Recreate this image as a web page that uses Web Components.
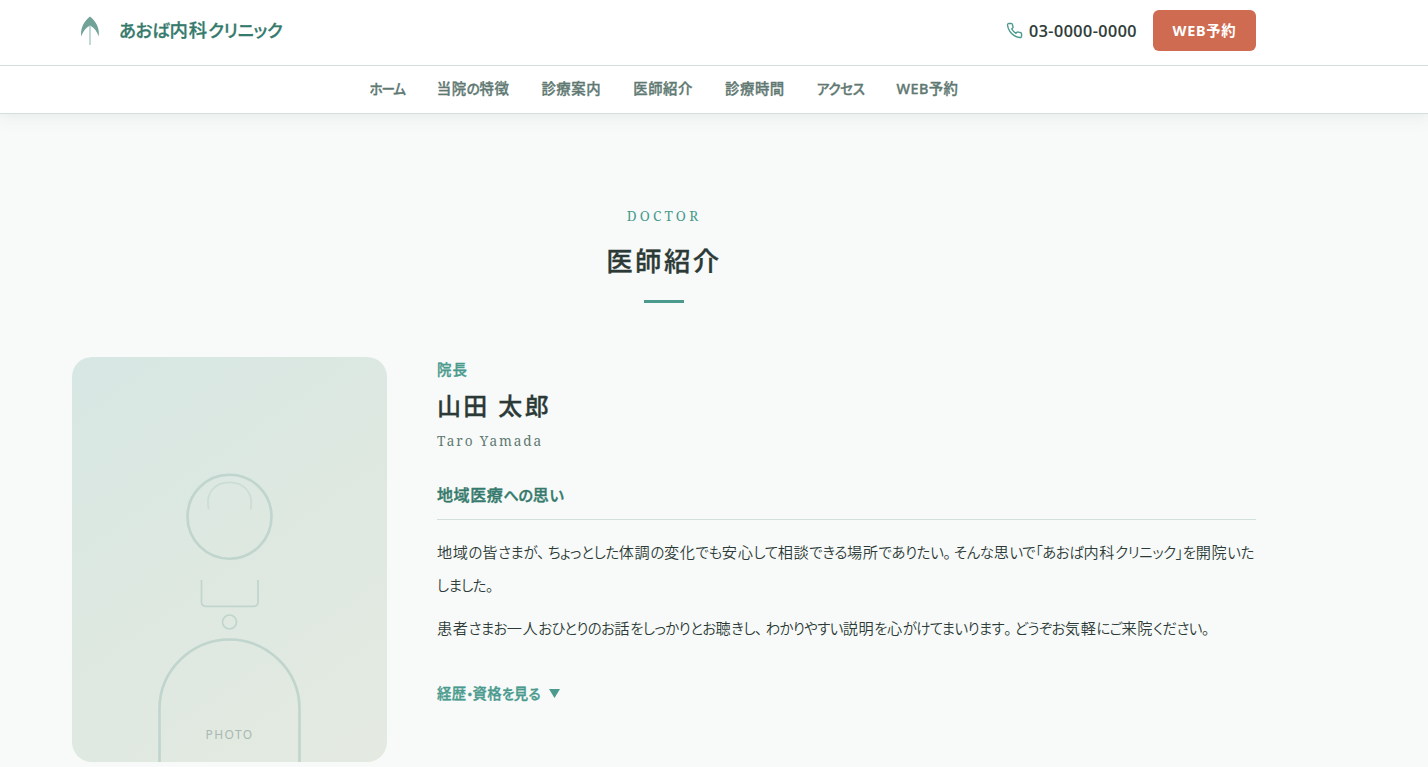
<!DOCTYPE html>
<html lang="ja">
<head>
<meta charset="UTF-8">
<title>あおば内科クリニック</title>
<style>
    html, body {
        margin: 0;
        height: 100%;
        overflow: hidden;
    }

    body {
        --green: #4a9a8e;
        --green-dark: #357a6c;
        --ink: #2c3a37;
        --muted: #5f7972;
        --line: #d3dfdc;
        --serif: "Noto Serif", "Liberation Serif", serif;
        background: #f8faf9;
        color: var(--ink);
        font-family: "Noto Sans", "Noto Sans CJK JP", sans-serif;
        font-size: 15px;
    }
</style>
</head>
<body>
<clinic-header></clinic-header>
<doctor-section></doctor-section>

<script>
// Japanese text with narrow kana; "fit" is the width of the line in px
class JaText extends HTMLElement {

    constructor() {
        super();
        this.attachShadow({ mode: 'open' });
    }

    connectedCallback() {
        const text = this.textContent.trim();
        const html = text
            .replace(/[\u3003-\u30ff]+/g, '<span class="kana">$&</span>')
            .replace(/[、。](?=.)/g, '<span class="mark">$&</span>');

        this.shadowRoot.innerHTML =
            `<style>
                :host {
                    display: inline-block;
                    white-space: nowrap;
                    font-feature-settings: "palt";
                }
                .kana {
                    font-size: 0.95em;
                    letter-spacing: var(--kana, inherit);
                }
                .mark {
                    letter-spacing: 3px;
                }
            </style>${html}`;

        this.fit(text);
    }

    fit(text) {
        const width = Number(this.getAttribute('fit'));
        if (!width) return;

        const kana = (text.match(/[\u3003-\u30ff]/g) || []).length;
        const now = this.getBoundingClientRect().width;
        const spacing = parseFloat(getComputedStyle(this).letterSpacing) || 0;

        if (kana) {
            this.style.setProperty('--kana', (spacing + (width - now) / kana) + 'px');
        } else {
            this.style.letterSpacing = (spacing + (width - now) / text.length) + 'px';
        }
    }
}

class ClinicHeader extends HTMLElement {

    constructor() {
        super();
        this.attachShadow({ mode: 'open' });
        this.shadowRoot.innerHTML =
            `
            <style>
                :host {
                    display: block;
                    position: relative;
                    background: #fff;
                    border-bottom: 1px solid var(--line);
                    box-shadow: 0 2px 16px 2px rgba(44, 90, 80, 0.08);
                }
                .top {
                    display: flex;
                    align-items: center;
                    justify-content: space-between;
                    width: 1184px;
                    height: 41px;
                    padding: 10px 0 14px 72px;
                }
                .brand {
                    display: flex;
                    align-items: center;
                    gap: 11px;
                    color: var(--green-dark);
                    font-size: 18.4px;
                    font-weight: 500;
                    -webkit-text-stroke: 0.3px;
                    letter-spacing: 0.9px;
                    line-height: 34px;
                }
                .brand ja-text {
                    padding-bottom: 2px;
                }
                svg {
                    display: block;
                }
                .contact {
                    display: flex;
                    align-items: center;
                    gap: 16px;
                }
                .tel {
                    display: flex;
                    align-items: center;
                    gap: 6px;
                    font-size: 16px;
                    font-weight: 500;
                    -webkit-text-stroke: 0.2px;
                }
                .reserve {
                    width: 103px;
                    border-radius: 6px;
                    background: #cf6b50;
                    color: #fff;
                    font-size: 14.4px;
                    font-weight: 700;
                    line-height: 41px;
                    text-align: center;
                }
                nav {
                    border-top: 1px solid var(--line);
                }
                ul {
                    display: flex;
                    justify-content: center;
                    gap: 32px;
                    width: 1328px;
                    margin: 0;
                    padding: 0 0 2px;
                    list-style: none;
                    color: var(--muted);
                    font-size: 14.4px;
                    font-weight: 500;
                    -webkit-text-stroke: 0.35px;
                    letter-spacing: 0.57px;
                    line-height: 45px;
                }
            </style>
            <div class="top">
                <div class="brand">
                    <svg width="36" height="36" viewBox="0 0 36 36">
                        <path d="M18 3.5C12.500 8 8 14.500 9.300 23.500C11 18.500 13.500 15 18 12.500C22.500 15 25 18.500 26.700 23.500C28 14.500 23.500 8 18 3.500Z" fill="#357a6c" opacity="0.7"/>
                        <path d="M18 13V32" stroke="#4a9a8e" stroke-width="2" opacity="0.35"/>
                    </svg>
                    <ja-text fit="163.500">あおば内科クリニック</ja-text>
                </div>
                <div class="contact">
                    <div class="tel">
                        <svg width="17" height="17" viewBox="0 0 24 24" fill="none" stroke="#4a9a8e" stroke-width="2" stroke-linecap="round" stroke-linejoin="round">
                            <path d="M22 16.920v3a2 2 0 0 1-2.180 2 19.790 19.790 0 0 1-8.630-3.070 19.500 19.500 0 0 1-6-6A19.790 19.790 0 0 1 2.120 4.180 2 2 0 0 1 4.110 2h3a2 2 0 0 1 2 1.720c.127.960.361 1.903.700 2.810a2 2 0 0 1-.450 2.110L8.090 9.910a16 16 0 0 0 6 6l1.270-1.270a2 2 0 0 1 2.110-.450c.907.339 1.850.573 2.810.700A2 2 0 0 1 22 16.920z"/>
                        </svg>
                        <ja-text fit="108">03-0000-0000</ja-text>
                    </div>
                    <div class="reserve"><ja-text fit="64">WEB予約</ja-text></div>
                </div>
            </div>
            <nav>
                <ul>
                    <li><ja-text fit="35.2">ホーム</ja-text></li>
                    <li><ja-text fit="72.6">当院の特徴</ja-text></li>
                    <li><ja-text fit="59.8">診療案内</ja-text></li>
                    <li><ja-text fit="59.8">医師紹介</ja-text></li>
                    <li><ja-text fit="59.8">診療時間</ja-text></li>
                    <li><ja-text fit="47.6">アクセス</ja-text></li>
                    <li><ja-text fit="62">WEB予約</ja-text></li>
                </ul>
            </nav>
            `;
    }
}

class DoctorPhoto extends HTMLElement {

    constructor() {
        super();
        this.attachShadow({ mode: 'open' });
        this.shadowRoot.innerHTML =
            `
            <style>
                :host {
                    display: grid;
                    width: 315px;
                    height: 405px;
                    overflow: hidden;
                    border-radius: 20px;
                    background: linear-gradient(145deg, #d7e7e3 0%, #dde8e1 45%, #e4eae1 100%);
                }
                svg, .label {
                    grid-area: 1 / 1;
                }
                .label {
                    align-self: end;
                    justify-self: center;
                    padding-bottom: 18px;
                    color: #a9b8b1;
                    font-size: 12px;
                    letter-spacing: 1.4px;
                    line-height: 18px;
                }
            </style>
            <svg width="315" height="405" viewBox="0 0 315 405" fill="none" stroke="#bfd5cd">
                <circle cx="157.500" cy="159.700" r="42" stroke-width="2.600"/>
                <path d="M136.800 152.500C133 137 142 125.300 157.500 125.300S182 137 178.500 152.500" stroke="#cbddd5" stroke-width="1.700"/>
                <path d="M129.500 223V245Q129.500 249.300 134 249.300H181.500Q186 249.300 186 245V223" stroke-width="1.700"/>
                <circle cx="157.500" cy="265" r="7" stroke-width="1.700"/>
                <path d="M87.500 405V352C87.500 312 121 282.500 157.500 282.500S227.500 312 227.500 352V405" stroke-width="2.600"/>
            </svg>
            <span class="label">PHOTO</span>
            `;
    }
}

class DoctorSection extends HTMLElement {

    constructor() {
        super();
        this.attachShadow({ mode: 'open' });
        this.shadowRoot.innerHTML =
            `
            <style>
                :host {
                    display: block;
                    width: 1184px;
                    padding: 91px 0 0 72px;
                }
                header {
                    display: flex;
                    flex-direction: column;
                    align-items: center;
                }
                .en {
                    color: var(--green);
                    font-family: var(--serif);
                    font-size: 13.6px;
                    letter-spacing: 2.2px;
                    line-height: 22px;
                }
                h2 {
                    margin: 14px 0 19px;
                    font-size: 26.4px;
                    font-weight: 500;
                    -webkit-text-stroke: 0.3px;
                    letter-spacing: 2.4px;
                    line-height: 40px;
                }
                .bar {
                    width: 40px;
                    height: 3px;
                    background: var(--green);
                }
                .profile {
                    display: flex;
                    gap: 50px;
                    margin-top: 54px;
                }
                .role {
                    padding-top: 1px;
                    color: var(--green);
                    font-size: 14.4px;
                    font-weight: 500;
                    -webkit-text-stroke: 0.35px;
                    letter-spacing: 0.7px;
                    line-height: 24px;
                }
                .name {
                    margin: 6px 0 6px;
                    font-size: 24px;
                    font-weight: 500;
                    -webkit-text-stroke: 0.3px;
                    line-height: 36px;
                }
                .roman {
                    color: var(--muted);
                    font-family: var(--serif);
                    font-size: 13.6px;
                    letter-spacing: 1.4px;
                    line-height: 22px;
                }
                h3 {
                    margin: 29px 0 16px;
                    padding-bottom: 10px;
                    border-bottom: 1px solid var(--line);
                    color: var(--green-dark);
                    font-size: 16px;
                    font-weight: 500;
                    -webkit-text-stroke: 0.4px;
                    letter-spacing: 0.6px;
                    line-height: 28px;
                }
                .info {
                    flex: 1;
                }
                p {
                    margin: 0 0 10px;
                    font-size: 15.2px;
                    font-weight: 350;
                    letter-spacing: 0.6px;
                    line-height: 33px;
                }
                ja-text {
                    vertical-align: top;
                }
                .more {
                    display: flex;
                    align-items: center;
                    gap: 9px;
                    margin-top: 37px;
                    color: var(--green);
                    font-size: 14.4px;
                    font-weight: 500;
                    -webkit-text-stroke: 0.35px;
                    letter-spacing: 0.3px;
                    line-height: 24px;
                }
                .more svg {
                    margin-bottom: 2px;
                }
            </style>
            <header>
                <div class="en"><ja-text fit="74.5">DOCTOR</ja-text></div>
                <h2><ja-text fit="115.500">医師紹介</ja-text></h2>
                <div class="bar"></div>
            </header>
            <div class="profile">
                <doctor-photo></doctor-photo>
                <div class="info">
                    <div class="role"><ja-text fit="31">院長</ja-text></div>
                    <div class="name"><ja-text fit="114">山田 太郎</ja-text></div>
                    <div class="roman"><ja-text fit="106">Taro Yamada</ja-text></div>
                    <h3><ja-text fit="126.5">地域医療への思い</ja-text></h3>
                    <p>
                        <ja-text fit="817">地域の皆さまが、ちょっとした体調の変化でも安心して相談できる場所でありたい。そんな思いで「あおば内科クリニック」を開院いた</ja-text><br>
                        <ja-text fit="57">しました。</ja-text>
                    </p>
                    <p><ja-text fit="773">患者さまお一人おひとりのお話をしっかりとお聴きし、わかりやすい説明を心がけてまいります。どうぞお気軽にご来院ください。</ja-text></p>
                    <div class="more">
                        <ja-text fit="103">経歴・資格を見る</ja-text>
                        <svg width="11" height="9" viewBox="0 0 11 9"><path d="M0 0H11L5.500 9Z" fill="#4a9a8e"/></svg>
                    </div>
                </div>
            </div>
            `;
    }
}

customElements.define('ja-text', JaText);
customElements.define('doctor-photo', DoctorPhoto);
customElements.define('clinic-header', ClinicHeader);
customElements.define('doctor-section', DoctorSection);
</script>
</body>
</html>
